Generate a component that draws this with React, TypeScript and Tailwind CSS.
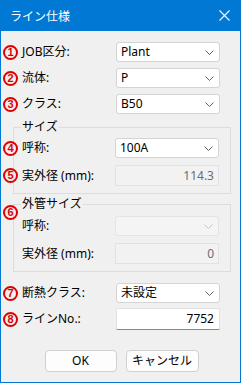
import React from 'react';

const FONT = "font-['Noto_Sans','Noto_Sans_CJK_JP',sans-serif]";

function Mark({ n }: { n: string }) {
  return (
    <span className="w-[19px] shrink-0 flex">
      <span className="w-[15px] h-[15px] flex items-center justify-center rounded-full border-[2px] border-[#e00000] text-[11px] leading-none font-bold text-[#e00000] font-['Liberation_Sans',sans-serif]">
        {n}
      </span>
    </span>
  );
}

function Chevron({ light }: { light?: boolean }) {
  return (
    <svg width="9" height="5" viewBox="0 0 9 5" className="shrink-0">
      <path d="M0.5 0.5 L4.5 4.5 L8.5 0.5" fill="none" stroke={light ? '#c4c4c4' : '#606060'} strokeWidth="1" />
    </svg>
  );
}

function Combo({ value, disabled }: { value: string; disabled?: boolean }) {
  return (
    <div
      className={
        disabled
          ? 'w-[104px] h-[20px] flex items-center justify-between pl-[4px] pr-[5px] rounded-[3px] border border-[#e4e4e4] bg-[#f4f4f4]'
          : 'w-[104px] h-[20px] flex items-center justify-between pl-[4px] pr-[5px] rounded-[3px] border border-[#d4d4d4] bg-white'
      }
    >
      <span className="text-[12px] leading-none text-black">{value}</span>
      <Chevron light={disabled} />
    </div>
  );
}

function Row({ mark, label, children, className = '' }: { mark?: string; label: string; children: React.ReactNode; className?: string }) {
  return (
    <div className={`flex items-center ${className}`}>
      {mark ? <Mark n={mark} /> : <span className="w-[19px] shrink-0" />}
      <span className="flex-1 text-[12px] leading-none text-black">{label}</span>
      {children}
    </div>
  );
}

export default function App() {
  return (
    <div className={`w-[241px] h-[383px] flex flex-col bg-[#f0f0f0] border border-t-0 border-[#0078d4] ${FONT}`}>
      {/* Title bar */}
      <div className="h-[31px] shrink-0 -mx-px flex items-center justify-between pl-[10px] pr-[11px] bg-[#0078d4]">
        <span className="text-[12px] leading-none text-white font-['Noto_Sans_CJK_JP',sans-serif]">ライン仕様</span>
        <svg width="11" height="11" viewBox="0 0 11 11">
          <path d="M0.5 0.5 L10.5 10.5 M10.5 0.5 L0.5 10.5" stroke="white" strokeWidth="1.1" />
        </svg>
      </div>

      <div className="flex flex-col pl-[2px] pr-[20px] pt-[11px]">
        <Row mark="1" label="JOB区分:"><Combo value="Plant" /></Row>
        <Row mark="2" label="流体:" className="mt-[6px]"><Combo value="P" /></Row>
        <Row mark="3" label="クラス:" className="mt-[6px]"><Combo value="B50" /></Row>

        {/* サイズ */}
        <fieldset className="relative mt-[5px] ml-[10px] -mr-[11px] border border-[#dcdcdc] pt-[3px] pr-[11px] pb-[7px]">
          <legend className="ml-[7px] px-[1px] text-[12px] leading-[16px] text-black">サイズ</legend>
          <Row mark="4" label="呼称:" className="-ml-[11px]"><Combo value="100A" /></Row>
          <Row mark="5" label="実外径 (mm):" className="-ml-[11px] mt-[7px]">
            <div className="w-[104px] h-[21px] flex items-center justify-end pr-[4px] border border-[#e2e2e2] bg-[#f2f2f2] text-[12px] leading-none text-[#6d6d6d]">
              114.3
            </div>
          </Row>
        </fieldset>

        {/* 外管サイズ */}
        <fieldset className="relative mt-[2px] ml-[10px] -mr-[11px] border border-[#dcdcdc] pt-[4px] pr-[11px] pb-[7px]">
          <legend className="ml-[7px] px-[1px] text-[12px] leading-[16px] text-black">外管サイズ</legend>
          <span className="absolute -left-[11px] top-[-7px]"><Mark n="6" /></span>
          <Row label="呼称:" className="-ml-[11px]"><Combo value="" disabled /></Row>
          <Row label="実外径 (mm):" className="-ml-[11px] mt-[7px]">
            <div className="w-[104px] h-[21px] flex items-center justify-end pr-[4px] border border-[#e2e2e2] bg-[#f2f2f2] text-[12px] leading-none text-[#6d6d6d]">
              0
            </div>
          </Row>
        </fieldset>

        <Row mark="7" label="断熱クラス:" className="mt-[11px]"><Combo value="未設定" /></Row>
        <Row mark="8" label="ラインNo.:" className="mt-[5px]">
          <div className="w-[104px] h-[22px] flex items-center justify-end pr-[5px] border border-[#e0e0e0] border-b-[#8a8a8a] rounded-t-[2px] bg-white text-[12px] leading-none text-black">
            7752
          </div>
        </Row>
      </div>

      <div className="flex justify-center gap-[9px] mt-[20px] pl-[2px]">
        <button className="w-[72px] h-[22px] rounded-[4px] border border-[#d0d0d0] bg-[#fdfdfd] text-[12px] leading-none text-black">OK</button>
        <button className="w-[73px] h-[22px] rounded-[4px] border border-[#d0d0d0] bg-[#fdfdfd] text-[12px] leading-none text-black">キャンセル</button>
      </div>
    </div>
  );
}
